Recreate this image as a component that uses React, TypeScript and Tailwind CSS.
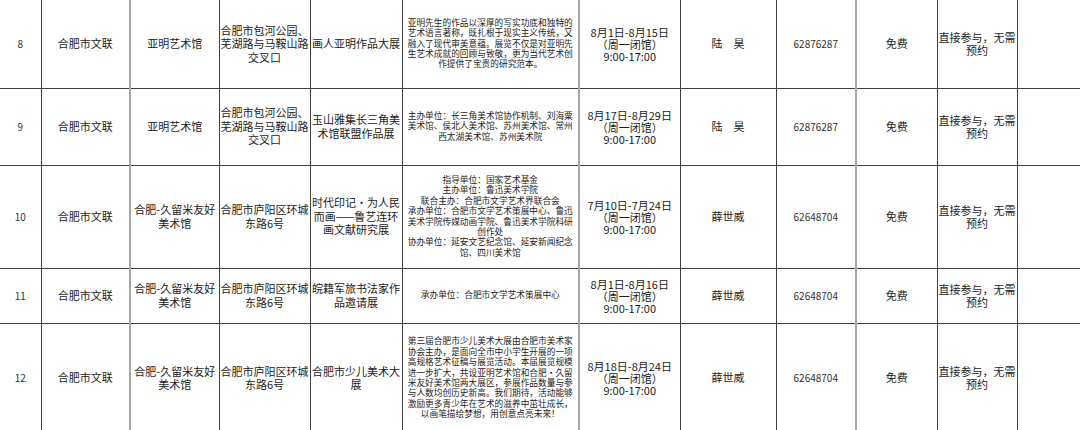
const rows = [
  {
    no: "8",
    org: ["合肥市文联"],
    venue: ["亚明艺术馆"],
    addr: ["合肥市包河公园、", "芜湖路与马鞍山路", "交叉口"],
    title: ["画人亚明作品大展"],
    desc: [
      "亚明先生的作品以深厚的写实功底和独特的",
      "艺术语言著称，既扎根于现实主义传统，又",
      "融入了现代审美意蕴。展览不仅是对亚明先",
      "生艺术成就的回顾与致敬，更为当代艺术创",
      "作提供了宝贵的研究范本。",
    ],
    date: ["8月1日-8月15日", "（周一闭馆）", "9:00-17:00"],
    contact: "陆　昊",
    phone: "62876287",
    h: "h-[88px]",
  },
  {
    no: "9",
    org: ["合肥市文联"],
    venue: ["亚明艺术馆"],
    addr: ["合肥市包河公园、", "芜湖路与马鞍山路", "交叉口"],
    title: ["玉山雅集长三角美", "术馆联盟作品展"],
    desc: [
      "主办单位：长三角美术馆协作机制、刘海粟",
      "美术馆、侯北人美术馆、苏州美术馆、常州",
      "西太湖美术馆、苏州美术院",
    ],
    date: ["8月17日-8月29日", "（周一闭馆）", "9:00-17:00"],
    contact: "陆　昊",
    phone: "62876287",
    h: "h-[77px]",
  },
  {
    no: "10",
    org: ["合肥市文联"],
    venue: ["合肥-久留米友好", "美术馆"],
    addr: ["合肥市庐阳区环城", "东路6号"],
    title: ["时代印记·为人民", "而画——鲁艺连环", "画文献研究展"],
    desc: [
      "指导单位：国家艺术基金",
      "主办单位：鲁迅美术学院",
      "联合主办：合肥市文学艺术界联合会",
      "承办单位：合肥市文学艺术策展中心、鲁迅",
      "美术学院传媒动画学院、鲁迅美术学院科研",
      "创作处",
      "协办单位：延安文艺纪念馆、延安新闻纪念",
      "馆、四川美术馆",
    ],
    date: ["7月10日-7月24日", "（周一闭馆）", "9:00-17:00"],
    contact: "薛世威",
    phone: "62648704",
    h: "h-[103px]",
  },
  {
    no: "11",
    org: ["合肥市文联"],
    venue: ["合肥-久留米友好", "美术馆"],
    addr: ["合肥市庐阳区环城", "东路6号"],
    title: ["皖籍军旅书法家作", "品邀请展"],
    desc: ["承办单位：合肥市文学艺术策展中心"],
    date: ["8月1日-8月16日", "（周一闭馆）", "9:00-17:00"],
    contact: "薛世威",
    phone: "62648704",
    h: "h-[55px]",
  },
  {
    no: "12",
    org: ["合肥市文联"],
    venue: ["合肥-久留米友好", "美术馆"],
    addr: ["合肥市庐阳区环城", "东路6号"],
    title: ["合肥市少儿美术大", "展"],
    desc: [
      "第三届合肥市少儿美术大展由合肥市美术家",
      "协会主办，是面向全市中小学生开展的一项",
      "高规格艺术征稿与展览活动。本届展览规模",
      "进一步扩大，共设亚明艺术馆和合肥·久留",
      "米友好美术馆两大展区，参展作品数量与参",
      "与人数均创历史新高。我们期待，活动能够",
      "激励更多青少年在艺术的滋养中茁壮成长，",
      "以画笔描绘梦想，用创意点亮未来！",
    ],
    date: ["8月18日-8月24日", "（周一闭馆）", "9:00-17:00"],
    contact: "薛世威",
    phone: "62648704",
    h: "h-[110px]",
  },
];

function Lines({ lines }: { lines: string[] }) {
  return (
    <>
      {lines.map((l, i) => (
        <span key={i} className="block whitespace-nowrap">
          {l}
        </span>
      ))}
    </>
  );
}

const dark = "border-r border-b border-[#404040]";
const grey = "border-r-2 border-r-[#a6a6a6] border-b border-b-[#404040]";

export default function App() {
  return (
    <div className="w-[1080px] h-[430px] overflow-hidden bg-white text-[#1c1c1c] font-['Noto_Sans_CJK_SC',sans-serif]">
      <table className="table-fixed border-collapse w-[1080px] text-center text-[11px] leading-[13.5px]">
        <colgroup>
          <col className="w-[41px]" />
          <col className="w-[89px]" />
          <col className="w-[89px]" />
          <col className="w-[91px]" />
          <col className="w-[92px]" />
          <col className="w-[177px]" />
          <col className="w-[101px]" />
          <col className="w-[96px]" />
          <col className="w-[80px]" />
          <col className="w-[81px]" />
          <col className="w-[80px]" />
          <col className="w-[63px]" />
        </colgroup>
        <tbody>
          {rows.map((r) => (
            <tr key={r.no} className={r.h}>
              <td className={`${dark} text-[10px] text-[#333]`}>{r.no}</td>
              <td className={grey}>
                <Lines lines={r.org} />
              </td>
              <td className={dark}>
                <Lines lines={r.venue} />
              </td>
              <td className={`${dark} overflow-visible`}>
                <Lines lines={r.addr} />
              </td>
              <td className={dark}>
                <Lines lines={r.title} />
              </td>
              <td className={`${grey} text-[8.7px] leading-[10.4px] px-0`}>
                <Lines lines={r.desc} />
              </td>
              <td className={`${dark} leading-[12px]`}>
                <Lines lines={r.date} />
              </td>
              <td className={dark}>{r.contact}</td>
              <td className={`${grey} text-[10px] text-[#333]`}>{r.phone}</td>
              <td className={dark}>免费</td>
              <td className={`${dark} leading-[13px]`}>
                <Lines lines={["直接参与，无需", "预约"]} />
              </td>
              <td className={dark}></td>
            </tr>
          ))}
        </tbody>
      </table>
    </div>
  );
}
